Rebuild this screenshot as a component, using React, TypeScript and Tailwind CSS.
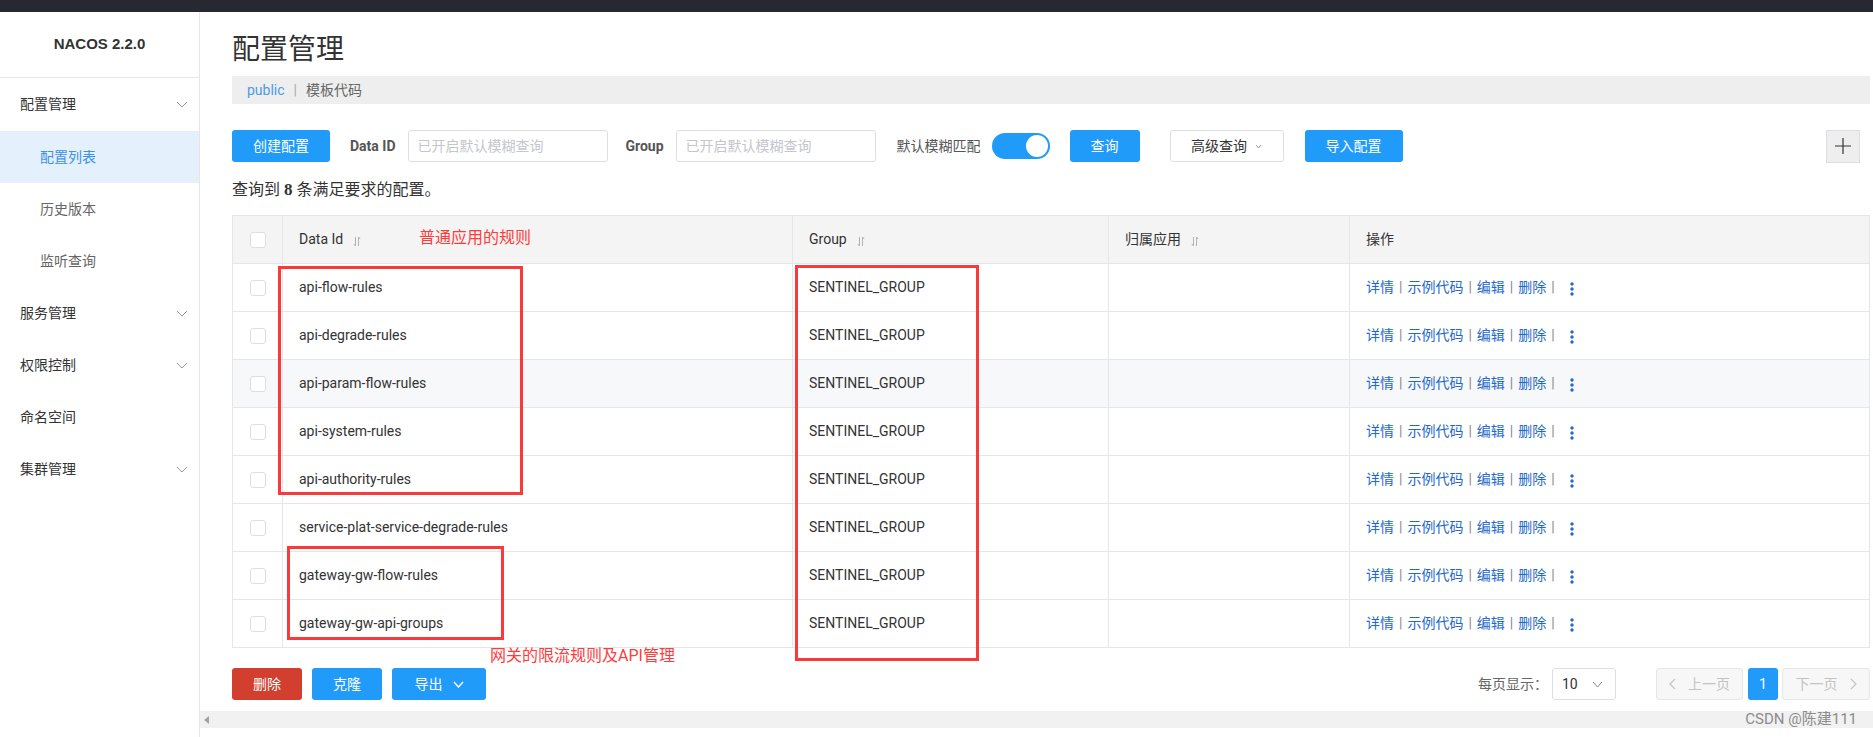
import React from 'react';

const ROWS = [
  'api-flow-rules',
  'api-degrade-rules',
  'api-param-flow-rules',
  'api-system-rules',
  'api-authority-rules',
  'service-plat-service-degrade-rules',
  'gateway-gw-flow-rules',
  'gateway-gw-api-groups',
];

function Chevron({ color = '#999', w = 12, h = 7, sw = 1 }: { color?: string; w?: number; h?: number; sw?: number }) {
  return (
    <svg width={w} height={h} viewBox={`0 0 ${w} ${h}`} fill="none">
      <path d={`M1 1L${w / 2} ${h - 1}L${w - 1} 1`} stroke={color} strokeWidth={sw} />
    </svg>
  );
}

function SortIcon() {
  return (
    <svg width="8" height="11" viewBox="0 0 8 11" fill="none" className="ml-[10px] mt-[4px]">
      <path d="M2.5 1v9M2.5 10L0.8 8M5.5 10V1M5.5 1L7.2 3" stroke="#b3b3b3" strokeWidth="1" />
    </svg>
  );
}

function Checkbox() {
  return <span className="block h-4 w-4 rounded-[3px] border border-[#dcdee3] bg-white" />;
}

function MenuItem({ label, chevron, sub, active, first }: { label: string; chevron?: boolean; sub?: boolean; active?: boolean; first?: boolean }) {
  return (
    <div
      className={`flex items-center justify-between text-[14px] ${first ? 'h-[53px]' : 'h-[52px]'} ${
        sub ? 'pl-10' : 'pl-5'
      } pr-[11px] ${active ? 'bg-[#e4f0fb] text-[#3e92e6]' : sub ? 'text-[#666]' : 'text-[#333]'}`}
    >
      <span>{label}</span>
      {chevron ? <Chevron /> : null}
    </div>
  );
}

function Sidebar() {
  return (
    <aside className="h-full w-[200px] shrink-0 border-r border-[#e6e6e6] bg-white">
      <div className="flex h-[66px] items-center justify-center border-b border-[#e6e6e6] font-['Liberation_Sans',sans-serif] text-[15px] font-bold text-[#333]">
        NACOS 2.2.0
      </div>
      <MenuItem label="配置管理" chevron first />
      <MenuItem label="配置列表" sub active />
      <MenuItem label="历史版本" sub />
      <MenuItem label="监听查询" sub />
      <MenuItem label="服务管理" chevron />
      <MenuItem label="权限控制" chevron />
      <MenuItem label="命名空间" />
      <MenuItem label="集群管理" chevron />
    </aside>
  );
}

function Toolbar() {
  return (
    <div className="mt-[26px] flex h-8 items-center text-[14px]">
      <button className="h-8 w-[98px] rounded-[3px] bg-[#209bfa] text-white">创建配置</button>
      <span className="ml-5 font-bold text-[#555]">Data ID</span>
      <div className="ml-[12px] flex h-8 w-[200px] items-center rounded-[3px] border border-[#dcdee3] pl-[9px] text-[#c4c6cc]">
        已开启默认模糊查询
      </div>
      <span className="ml-[18px] font-bold text-[#555]">Group</span>
      <div className="ml-[12px] flex h-8 w-[200px] items-center rounded-[3px] border border-[#dcdee3] pl-[9px] text-[#c4c6cc]">
        已开启默认模糊查询
      </div>
      <span className="ml-[21px] text-[#555]">默认模糊匹配</span>
      <div className="ml-[11px] flex h-[26px] w-[58px] items-center justify-end rounded-full bg-[#209bfa] pr-[2px]">
        <span className="block h-[22px] w-[22px] rounded-full bg-white" />
      </div>
      <button className="ml-5 h-8 w-[70px] rounded-[3px] bg-[#209bfa] text-white">查询</button>
      <button className="ml-[30px] flex h-8 w-[114px] items-center justify-center gap-[8px] rounded-[3px] border border-[#dcdee3] bg-white text-[#333]">
        高级查询
        <Chevron w={7} h={5} color="#999" />
      </button>
      <button className="ml-[21px] h-8 w-[98px] rounded-[3px] bg-[#209bfa] text-white">导入配置</button>
      <button className="ml-auto mr-[10px] flex h-[33px] w-[34px] items-center justify-center border border-[#dcdee3] bg-[#eeeeee]">
        <svg width="16" height="16" viewBox="0 0 16 16" fill="none">
          <path d="M8 0v16M0 8h16" stroke="#333" strokeWidth="1.2" />
        </svg>
      </button>
    </div>
  );
}

function Actions() {
  const sep = <span className="mx-[5px] text-[#888]">|</span>;
  return (
    <div className="flex items-center text-[14px] text-[#1f69c8]">
      <span>详情</span>
      {sep}
      <span>示例代码</span>
      {sep}
      <span>编辑</span>
      {sep}
      <span>删除</span>
      {sep}
      <svg width="4" height="14" viewBox="0 0 4 14" className="ml-[10px] mt-[3px]">
        <circle cx="2" cy="2" r="1.7" fill="#1f69c8" />
        <circle cx="2" cy="7" r="1.7" fill="#1f69c8" />
        <circle cx="2" cy="12" r="1.7" fill="#1f69c8" />
      </svg>
    </div>
  );
}

function ConfigTable() {
  return (
    <table className="mt-[15px] w-full table-fixed border-collapse border border-[#e6e6e6] text-[14px] text-[#333]">
      <colgroup>
        <col className="w-[50px]" />
        <col className="w-[510px]" />
        <col className="w-[316px]" />
        <col className="w-[241px]" />
        <col />
      </colgroup>
      <thead>
        <tr className="h-[48px] bg-[#f4f4f4]">
          <th className="border border-[#e6e6e6] px-[17px]">
            <Checkbox />
          </th>
          <th className="border border-[#e6e6e6] pl-4 text-left font-normal">
            <span className="flex items-center">
              Data Id
              <SortIcon />
            </span>
          </th>
          <th className="border border-[#e6e6e6] pl-4 text-left font-normal">
            <span className="flex items-center">
              Group
              <SortIcon />
            </span>
          </th>
          <th className="border border-[#e6e6e6] pl-4 text-left font-normal">
            <span className="flex items-center">
              归属应用
              <SortIcon />
            </span>
          </th>
          <th className="border border-[#e6e6e6] pl-4 text-left font-normal">操作</th>
        </tr>
      </thead>
      <tbody>
        {ROWS.map((id, i) => (
          <tr key={id} className={`h-[48px] ${i === 2 ? 'bg-[#f7f8fa]' : 'bg-white'}`}>
            <td className="border border-[#e6e6e6] px-[17px]">
              <Checkbox />
            </td>
            <td className="border border-[#e6e6e6] pl-4">{id}</td>
            <td className="border border-[#e6e6e6] pl-4">SENTINEL_GROUP</td>
            <td className="border border-[#e6e6e6] pl-4" />
            <td className="border border-[#e6e6e6] pl-4">
              <Actions />
            </td>
          </tr>
        ))}
      </tbody>
    </table>
  );
}

function Footer() {
  return (
    <div className="mt-5 flex h-8 items-center text-[14px]">
      <button className="h-8 w-[70px] rounded-[3px] bg-[#d33f2f] text-white">删除</button>
      <button className="ml-[10px] h-8 w-[70px] rounded-[3px] bg-[#209bfa] text-white">克隆</button>
      <button className="ml-[10px] flex h-8 w-[94px] items-center justify-center gap-[10px] rounded-[3px] bg-[#209bfa] text-white">
        导出
        <Chevron w={11} h={7} color="#fff" sw={1.4} />
      </button>
      <div className="ml-auto flex items-center">
        <span className="text-[#666]">每页显示：</span>
        <div className="ml-[4px] flex h-8 w-16 items-center justify-between rounded-[3px] border border-[#dcdee3] pl-[9px] pr-[12px] text-[#333]">
          10
          <Chevron w={11} h={7} color="#888" />
        </div>
        <div className="ml-10 flex h-8 w-[87px] items-center justify-center gap-[12px] rounded-[3px] border border-[#e6e6e6] bg-[#f7f7f7] text-[#c4c4c4]">
          <svg width="7" height="12" viewBox="0 0 7 12" fill="none">
            <path d="M6 1L1 6l5 5" stroke="#c4c4c4" strokeWidth="1.2" />
          </svg>
          上一页
        </div>
        <div className="ml-[5px] flex h-8 w-[30px] items-center justify-center rounded-[3px] bg-[#209bfa] text-white">1</div>
        <div className="ml-1 flex h-8 w-[88px] items-center justify-center gap-[12px] rounded-[3px] border border-[#e6e6e6] bg-[#f7f7f7] text-[#c4c4c4]">
          下一页
          <svg width="7" height="12" viewBox="0 0 7 12" fill="none">
            <path d="M1 1l5 5-5 5" stroke="#c4c4c4" strokeWidth="1.2" />
          </svg>
        </div>
      </div>
    </div>
  );
}

export default function App() {
  return (
    <div className="relative h-[737px] w-[1873px] overflow-hidden bg-white font-['Roboto','Noto_Sans_CJK_SC',sans-serif]">
      <div className="h-3 bg-[#262a30]" />
      <div className="flex h-[725px]">
        <Sidebar />
        <main className="flex min-w-0 flex-1 flex-col">
          <div className="flex-1 pl-8 pr-[3px]">
            <h1 className="h-16 pt-5 text-[28px] font-normal leading-9 text-[#333]">配置管理</h1>
            <div className="flex h-7 items-center bg-[#eeeeee] pl-[15px] text-[14px]">
              <span className="text-[#4a9be8]">public</span>
              <span className="mx-[9px] text-[#aaa]">|</span>
              <span className="text-[#666]">模板代码</span>
            </div>
            <Toolbar />
            <div className="mt-[18px] h-5 text-[16px] leading-5 text-[#333]">
              查询到 <b className="font-['Liberation_Serif',serif] text-[17px]">8</b> 条满足要求的配置。
            </div>
            <ConfigTable />
            <Footer />
          </div>
          <div className="flex h-[17px] items-center bg-[#f1f1f1] pl-[4px]">
            <svg width="5" height="8" viewBox="0 0 5 8">
              <path d="M5 0L0 4l5 4z" fill="#a3a3a3" />
            </svg>
            <span className="ml-auto mr-[16px] text-[15px] text-[#8c8c8c]">CSDN @陈建111</span>
          </div>
          <div className="h-[9px]" />
        </main>
      </div>

      {/* red annotations drawn on top of the screenshot */}
      <div className="pointer-events-none absolute left-[278px] top-[266px] h-[229px] w-[245px] border-[3px] border-[#fa3a3a]" />
      <div className="pointer-events-none absolute left-[795px] top-[265px] h-[396px] w-[184px] border-[3px] border-[#fa3a3a]" />
      <div className="pointer-events-none absolute left-[287px] top-[546px] h-[94px] w-[217px] border-[3px] border-[#fa3a3a]" />
      <span className="absolute left-[419px] top-[227px] text-[16px] leading-[22px] text-[#ff3b3b]">普通应用的规则</span>
      <span className="absolute left-[490px] top-[645px] text-[16px] leading-[22px] text-[#ff3b3b]">网关的限流规则及API管理</span>
    </div>
  );
}
